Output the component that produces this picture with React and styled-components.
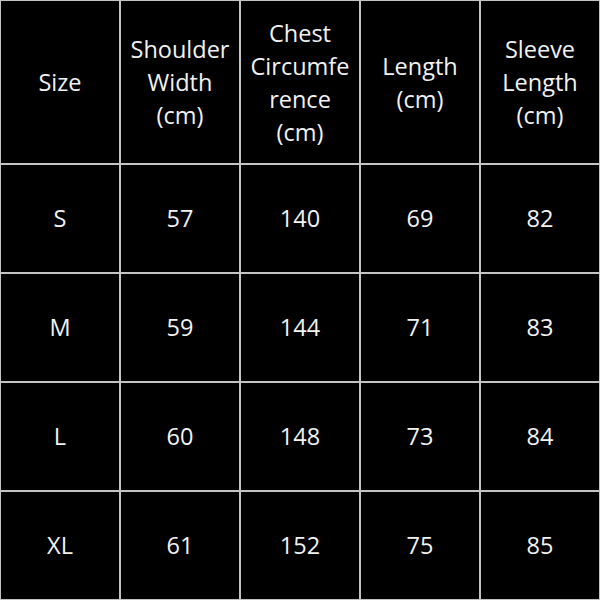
import React from "react"
import styled, { createGlobalStyle } from "styled-components"

const GlobalStyle = createGlobalStyle`
  html, body {
    margin: 0;
    padding: 0;
    background: #000;
  }
  body {
    font-family: "Open Sans", "Noto Sans", sans-serif;
  }
`

const Grid = styled.div`
  width: 600px;
  height: 600px;
  box-sizing: border-box;
  padding: 1px;
  display: grid;
  grid-template-columns: repeat(5, 1fr);
  grid-template-rows: 162px repeat(4, 107px);
  gap: 2px;
  background-color: #c4c4c4;
`

const Cell = styled.div`
  background-color: #000;
  color: #f2f2f2;
  font-size: 23.5px;
  line-height: 33px;
  display: flex;
  flex-direction: column;
  align-items: center;
  justify-content: center;
  text-align: center;
  padding-top: ${(p) => (p.$head ? "1px" : "0")};
`

const header = [
  ["Size"],
  ["Shoulder", "Width", "(cm)"],
  ["Chest", "Circumfe", "rence", "(cm)"],
  ["Length", "(cm)"],
  ["Sleeve", "Length", "(cm)"],
]

const rows = [
  ["S", "57", "140", "69", "82"],
  ["M", "59", "144", "71", "83"],
  ["L", "60", "148", "73", "84"],
  ["XL", "61", "152", "75", "85"],
]

const App = () => {
  return (
    <>
      <GlobalStyle />
      <Grid>
        {header.map((lines, i) => (
          <Cell key={"h" + i} $head>
            {lines.map((l) => (
              <span key={l}>{l}</span>
            ))}
          </Cell>
        ))}
        {rows.map((row) =>
          row.map((v, i) => <Cell key={row[0] + i}>{v}</Cell>)
        )}
      </Grid>
    </>
  )
}

export default App
